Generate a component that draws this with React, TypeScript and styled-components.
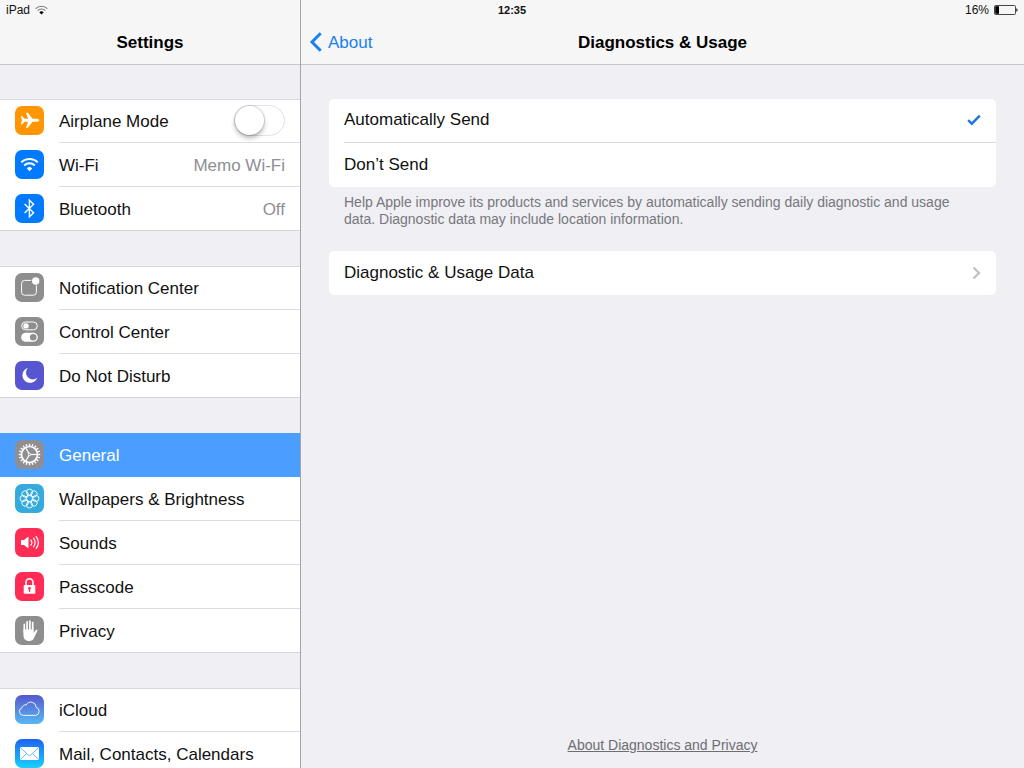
import React, { useState } from 'react';
import styled, { createGlobalStyle, css } from 'styled-components';

const GlobalStyle = createGlobalStyle`
  * { box-sizing: border-box; }
  body {
    margin: 0;
    background: #efeff4;
    color: #111;
    font: 17px/20px "Liberation Sans", Arial, sans-serif;
  }
  button, input { font: inherit; color: inherit; }
`;

const Screen = styled.div`
  display: grid;
  grid-template-columns: 301px 1fr;
  grid-template-rows: 20px 1fr;
  height: 100vh;
`;

const StatusBar = styled.div`
  grid-area: 1 / 1 / 2 / 3;
  z-index: 1;
  display: grid;
  grid-template-columns: 1fr auto 1fr;
  align-items: center;
  padding: 0 6px;
  font-size: 12px;
`;

const StatusGroup = styled.div<{ $end?: boolean }>`
  display: flex;
  align-items: center;
  justify-content: ${p => (p.$end ? 'flex-end' : 'flex-start')};
  gap: 5px;
`;

const Clock = styled.time`
  font-weight: bold;
  font-size: 11px;
`;

const Pane = styled.div`
  grid-row: 1 / 3;
  display: flex;
  flex-direction: column;
  min-width: 0;
  min-height: 0;
`;

const Sidebar = styled(Pane)`
  grid-column: 1;
  border-right: 1px solid #a4a4a9;
`;

const Detail = styled(Pane)`
  grid-column: 2;
`;

const NavBar = styled.header`
  display: grid;
  grid-template-columns: 1fr auto 1fr;
  align-items: center;
  flex: none;
  height: 65px;
  padding: 22px 8px 0;
  background: #f6f6f6;
  border-bottom: 1px solid #c6c6cb;
`;

const Title = styled.h1`
  grid-column: 2;
  margin: 0;
  font-size: 17px;
  font-weight: bold;
  color: #000;
`;

const BackButton = styled.button`
  display: flex;
  align-items: center;
  justify-self: start;
  gap: 6px;
  padding: 0;
  border: 0;
  background: none;
  color: #1a80f0;
  svg { margin-bottom: 2px; }
`;

const SettingsList = styled.nav`
  display: flex;
  flex-direction: column;
  gap: 35px;
  padding-top: 34px;
  overflow-y: auto;
  scrollbar-width: none;
`;

const Group = styled.ul`
  flex: none;
  margin: 0;
  padding: 0;
  list-style: none;
  background: #fff;
`;

const Item = styled.li<{ $selected?: boolean }>`
  display: flex;
  height: 44px;
  background: ${p => (p.$selected ? '#4a9eff' : '#fff')};
  color: ${p => (p.$selected ? '#fff' : '#111')};
  &:first-child { box-shadow: inset 0 1px ${p => (p.$selected ? '#4a9eff' : '#d9d9dd')}; }
  &:last-child { box-shadow: inset 0 -1px #d4d4d8; }
`;

const rowLayout = css`
  display: flex;
  flex: 1;
  gap: 15px;
  align-items: center;
  padding: 0 0 0 15px;
  border: 0;
  background: none;
  text-align: left;
`;

const RowButton = styled.button`
  ${rowLayout}
`;

const RowLabel = styled.label`
  ${rowLayout}
`;

const RowText = styled.span<{ $line: boolean }>`
  display: flex;
  flex: 1;
  align-items: center;
  justify-content: space-between;
  align-self: stretch;
  padding: 3px 15px 0 0;
  border-bottom: 1px solid ${p => (p.$line ? '#dcdce0' : 'transparent')};
`;

const Value = styled.span`
  color: #8e8e93;
`;

const Switch = styled.input`
  appearance: none;
  display: flex;
  width: 51px;
  height: 31px;
  margin: 0 0 3px;
  border: 1px solid #e2e2e2;
  border-radius: 16px;
  background: #fff;
  &::before {
    content: '';
    width: 29px;
    height: 29px;
    border-radius: 50%;
    background: #fff;
    box-shadow: 0 0 1px 1px rgba(0, 0, 0, 0.12), 0 3px 5px rgba(0, 0, 0, 0.28);
  }
  &:checked { background: #4cd964; justify-content: flex-end; }
`;

const IconSvg = styled.svg`
  flex: none;
  display: block;
`;

const TileSvg = styled(IconSvg)`
  margin-bottom: 1px;
`;

const Content = styled.main`
  display: flex;
  flex: 1;
  flex-direction: column;
  padding: 34px 28px 13px;
`;

const Card = styled.div`
  overflow: hidden;
  padding-left: 15px;
  border-radius: 5px;
  background: #fff;
`;

const Option = styled.label`
  display: flex;
  align-items: center;
  justify-content: space-between;
  height: 44px;
  padding: 0 15px 1px 0;
  &:not(:last-child) { border-bottom: 1px solid #d9d9dd; }
  svg { visibility: hidden; }
  &:has(input:checked) svg { visibility: visible; }
`;

const Radio = styled.input`
  appearance: none;
  width: 0;
  height: 0;
  margin: 0;
`;

const OptionText = styled.span`
  flex: 1;
`;

const Note = styled.p`
  margin: 7px 15px 23px;
  font-size: 14px;
  line-height: 17px;
  color: #77777c;
`;

const LinkRow = styled.button`
  display: flex;
  align-items: center;
  justify-content: space-between;
  width: 100%;
  height: 44px;
  padding: 0 15px 0 0;
  border: 0;
  background: none;
  text-align: left;
`;

const PrivacyLink = styled.a`
  align-self: center;
  margin-top: auto;
  font-size: 14px;
  color: #6d6d72;
`;

type IconName =
  | 'airplane' | 'wifi' | 'bluetooth' | 'notification' | 'control' | 'moon'
  | 'gear' | 'flower' | 'sound' | 'lock' | 'hand' | 'cloud' | 'mail';

const tileColor: Record<IconName, string> = {
  airplane: '#ff9500', wifi: '#007aff', bluetooth: '#007aff',
  notification: '#8e8e8e', control: '#8e8e8e', moon: '#5756d0',
  gear: '#8e8e93', flower: '#35aadc', sound: '#ff2d55', lock: '#ff2d55',
  hand: '#8e8e8e', cloud: 'url(#cloudFill)', mail: 'url(#mailFill)',
};

const spokes = (n: number) => Array.from({ length: n }, (_, i) => (i * 360) / n);

const glyphs: Record<IconName, React.ReactNode> = {
  airplane: (
    <path fill="#fff" d="M24.4 14.3c0 .9-1.4 1.500-3 1.500h-3.800l-4.800 6h-1.900l2.300-6H9.500l-2.200 2.500H5.900l1-4-1-4h1.400l2.200 2.500h3.700l-2.300-6h1.900l4.800 6h3.800c1.600 0 3 .6 3 1.500z" />
  ),
  wifi: (
    <g fill="none" stroke="#fff" strokeWidth="2">
      <path d="M6.300 12.400a11.600 11.600 0 0 1 16.400 0" />
      <path d="M9.200 15.500a7.500 7.500 0 0 1 10.600 0" />
      <path d="M14.500 21.300l-2.700-2.900a3.900 3.900 0 0 1 5.400 0z" fill="#fff" stroke="none" />
    </g>
  ),
  bluetooth: (
    <path fill="none" stroke="#fff" strokeWidth="1.4" d="M9.600 10l9 8.800-4.200 4V6.200l4.200 4-9 8.800" />
  ),
  notification: (
    <>
      <rect x="6.6" y="7.4" width="14.8" height="14.8" rx="3" fill="none" stroke="#fff" strokeWidth="1" />
      <circle cx="20.7" cy="8" r="4.6" fill="#8e8e8e" />
      <circle cx="20.7" cy="8" r="3.7" fill="#fff" />
    </>
  ),
  control: (
    <>
      <rect x="6.7" y="5" width="15.6" height="7.8" rx="3.9" fill="none" stroke="#fff" strokeWidth="1" />
      <circle cx="11" cy="8.9" r="2.7" fill="#fff" />
      <rect x="6.2" y="15.8" width="16.6" height="9" rx="4.5" fill="#fff" />
      <circle cx="18.2" cy="20.3" r="3.3" fill="#8e8e8e" />
    </>
  ),
  moon: (
    <path fill="#fff" d="M12.800 7A7.600 7.600 0 1 0 22.200 16.800A6.800 6.800 0 0 1 12.800 7z" />
  ),
  gear: (
    <g stroke="#fff" fill="none">
      <circle cx="14.5" cy="14.5" r="8" strokeWidth="1.6" />
      {spokes(20).map(a => (
        <path key={a} d="M14.5 6V3.700" strokeWidth="1.4" transform={`rotate(${a} 14.5 14.5)`} />
      ))}
      {[90, 210, 330].map(a => (
        <path key={a} d="M14.5 13.500V6.500" strokeWidth="1.1" transform={`rotate(${a} 14.5 14.5)`} />
      ))}
      <circle cx="14.5" cy="14.5" r="1.2" strokeWidth="1" />
    </g>
  ),
  flower: (
    <g stroke="#fff" strokeWidth=".9" fill="none">
      {spokes(8).map(a => (
        <circle key={a} cx="14.5" cy="8.1" r="3.1" transform={`rotate(${a} 14.5 14.5)`} />
      ))}
      <circle cx="14.5" cy="14.5" r="3" />
    </g>
  ),
  sound: (
    <>
      <path fill="#fff" d="M6 12h3l4.500-3.400v11.800L9 17H6z" />
      <g fill="none" stroke="#fff" strokeWidth="1.2" strokeLinecap="round">
        <path d="M15.900 12a4 4 0 0 1 0 5" />
        <path d="M18.500 10.200a7 7 0 0 1 0 8.600" />
        <path d="M21.200 8.600a10 10 0 0 1 0 11.800" />
      </g>
    </>
  ),
  lock: (
    <>
      <path fill="none" stroke="#fff" strokeWidth="1.5" d="M11 13.500v-3.200a3.500 3.500 0 0 1 7 0v3.200" />
      <rect x="8.700" y="13" width="11.6" height="8.8" rx=".8" fill="#fff" />
      <path fill="#ff2d55" d="M14.500 15.100a1.300 1.300 0 0 1 .6 2.500v2.300h-1.200v-2.300a1.300 1.300 0 0 1 .6-2.500z" />
    </>
  ),
  hand: (
    <g stroke="#fff" strokeLinecap="round" strokeWidth="1.7" fill="none">
      <path d="M9.300 16V8.400M12.100 14V5.800M14.900 14V5M17.700 15V6.600" />
      <path d="M8.450 13.500h10.100v3.600l2.300-3c.7-.8 2-.5 1.700.5l-3.600 7.500c-1 2.200-2.200 3-4.700 3-4 0-5.800-2.200-5.800-6z" fill="#fff" stroke="none" />
    </g>
  ),
  cloud: (
    <path fill="none" stroke="#fff" strokeWidth=".9" d="M8.200 20.400a4 4 0 0 1-1-7.800 3.100 3.100 0 0 1 4-2.600 5.300 5.300 0 0 1 10 2.300 4.200 4.200 0 0 1-.3 8.100z" />
  ),
  mail: (
    <>
      <rect x="5" y="8" width="19" height="13" rx="1" fill="#fff" />
      <path fill="none" stroke="#43a4f5" strokeWidth=".8" d="M5.300 8.400l7.600 7.400c1 .9 2.200.9 3.200 0l7.600-7.400M5.300 20.600l6-6M23.700 20.600l-6-6" />
    </>
  ),
};

function Icon({ name }: { name: IconName }) {
  return (
    <TileSvg width="29" height="29" viewBox="0 0 29 29" aria-hidden="true">
      <defs>
        <linearGradient id="cloudFill" x1="0" y1="0" x2="0" y2="1">
          <stop offset="0" stopColor="#5758ce" />
          <stop offset="1" stopColor="#57b9f3" />
        </linearGradient>
        <linearGradient id="mailFill" x1="0" y1="0" x2="0" y2="1">
          <stop offset="0" stopColor="#1d62f0" />
          <stop offset="1" stopColor="#19d1fd" />
        </linearGradient>
      </defs>
      <rect width="29" height="29" rx="7" fill={tileColor[name]} />
      {glyphs[name]}
    </TileSvg>
  );
}

type Entry = { icon: IconName; label: string; value?: string; toggle?: boolean };

const groups: Entry[][] = [
  [
    { icon: 'airplane', label: 'Airplane Mode', toggle: true },
    { icon: 'wifi', label: 'Wi-Fi', value: 'Memo Wi-Fi' },
    { icon: 'bluetooth', label: 'Bluetooth', value: 'Off' },
  ],
  [
    { icon: 'notification', label: 'Notification Center' },
    { icon: 'control', label: 'Control Center' },
    { icon: 'moon', label: 'Do Not Disturb' },
  ],
  [
    { icon: 'gear', label: 'General' },
    { icon: 'flower', label: 'Wallpapers & Brightness' },
    { icon: 'sound', label: 'Sounds' },
    { icon: 'lock', label: 'Passcode' },
    { icon: 'hand', label: 'Privacy' },
  ],
  [
    { icon: 'cloud', label: 'iCloud' },
    { icon: 'mail', label: 'Mail, Contacts, Calendars' },
  ],
];

export default function App() {
  const [selected, setSelected] = useState('General');
  const [send, setSend] = useState('Automatically Send');

  return (
    <>
      <GlobalStyle />
      <Screen>
        <StatusBar>
          <StatusGroup>
            <span>iPad</span>
            <IconSvg width="13" height="10" viewBox="0 0 13 10" aria-label="Wi-Fi signal">
              <g fill="none" stroke="#777" strokeWidth="1.1">
                <path d="M.7 3.600a8.300 8.300 0 0 1 11.600 0" />
                <path d="M2.700 5.600a5.400 5.400 0 0 1 7.600 0" />
              </g>
              <path fill="#000" d="M6.500 9.400L4.300 7.200a3.200 3.200 0 0 1 4.400 0z" />
            </IconSvg>
          </StatusGroup>
          <Clock>12:35</Clock>
          <StatusGroup $end>
            <span>16%</span>
            <IconSvg width="24" height="10" viewBox="0 0 24 10" aria-label="Battery">
              <rect x=".5" y=".5" width="21" height="9" rx="1" fill="none" stroke="#333" strokeWidth=".9" />
              <rect x="1.2" y="1.2" width="3.8" height="7.6" fill="#000" />
              <path d="M22.300 3.200c1.800.5 1.800 3.100 0 3.600z" fill="#222" />
            </IconSvg>
          </StatusGroup>
        </StatusBar>

        <Sidebar>
          <NavBar>
            <Title>Settings</Title>
          </NavBar>
          <SettingsList aria-label="Settings">
            {groups.map(entries => (
              <Group key={entries[0].label}>
                {entries.map((e, i) => {
                  const active = e.label === selected;
                  const line = i < entries.length - 1 && !active;
                  return (
                    <Item key={e.label} $selected={active}>
                      {e.toggle ? (
                        <RowLabel>
                          <Icon name={e.icon} />
                          <RowText $line={line}>
                            {e.label}
                            <Switch type="checkbox" role="switch" />
                          </RowText>
                        </RowLabel>
                      ) : (
                        <RowButton type="button" onClick={() => setSelected(e.label)}>
                          <Icon name={e.icon} />
                          <RowText $line={line}>
                            {e.label}
                            {e.value && <Value>{e.value}</Value>}
                          </RowText>
                        </RowButton>
                      )}
                    </Item>
                  );
                })}
              </Group>
            ))}
          </SettingsList>
        </Sidebar>

        <Detail>
          <NavBar>
            <BackButton type="button">
              <IconSvg width="13" height="20" viewBox="0 0 13 20" aria-hidden="true">
                <path d="M11.700 1.300L3 10l8.700 8.700" fill="none" stroke="#1a80f0" strokeWidth="3" />
              </IconSvg>
              About
            </BackButton>
            <Title>Diagnostics &amp; Usage</Title>
          </NavBar>
          <Content>
            <Card role="radiogroup" aria-label="Diagnostics & Usage">
              {['Automatically Send', 'Don’t Send'].map(label => (
                <Option key={label}>
                  <Radio type="radio" name="send" checked={send === label} onChange={() => setSend(label)} />
                  <OptionText>{label}</OptionText>
                  <IconSvg width="14" height="12" viewBox="0 0 14 12" aria-hidden="true">
                    <path d="M1.200 6.200l3.600 3.500 8-8" fill="none" stroke="#1a78e6" strokeWidth="2.4" />
                  </IconSvg>
                </Option>
              ))}
            </Card>
            <Note>
              Help Apple improve its products and services by automatically sending daily diagnostic and usage
              data. Diagnostic data may include location information.
            </Note>
            <Card>
              <LinkRow type="button">
                Diagnostic &amp; Usage Data
                <IconSvg width="9" height="14" viewBox="0 0 9 14" aria-hidden="true">
                  <path d="M1.500 1.500L7 7l-5.500 5.500" fill="none" stroke="#c2c2c7" strokeWidth="2.4" />
                </IconSvg>
              </LinkRow>
            </Card>
            <PrivacyLink href="#privacy">About Diagnostics and Privacy</PrivacyLink>
          </Content>
        </Detail>
      </Screen>
    </>
  );
}
